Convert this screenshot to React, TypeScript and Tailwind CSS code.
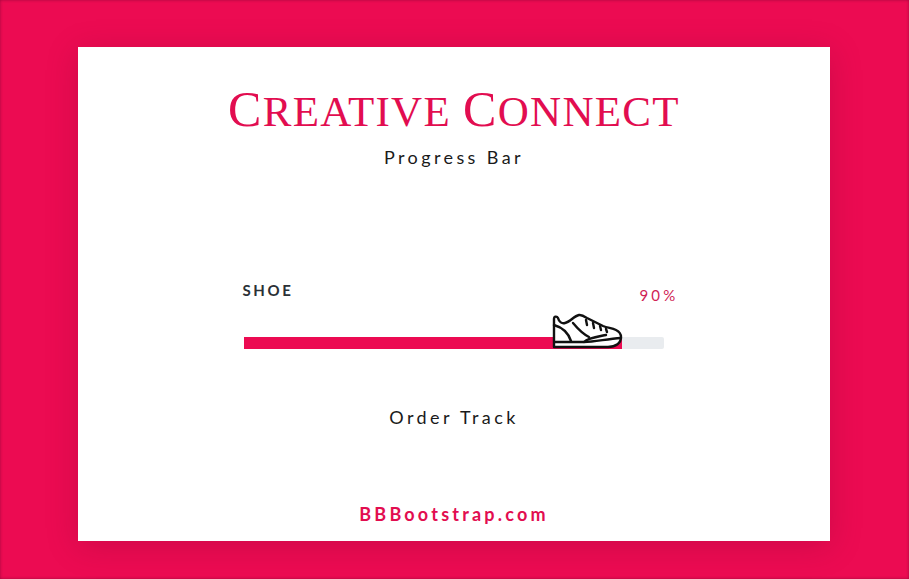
export default function App() {
  const small = "text-[43px]";
  const big = "text-[50px]";
  return (
    <div className="h-[579px] w-[909px] bg-[#ec0b52] pt-[47px] pl-[78px] overflow-hidden shadow-[inset_0_0_3px_rgba(80,0,40,0.5)]">
      <div className="relative h-[494px] w-[752px] bg-white shadow-[0_5px_30px_rgba(100,0,40,0.22)] flex flex-col items-center" style={{ fontFamily: '"Lato", sans-serif' }}>
        <h1 className="mt-[32px] h-[60px] leading-[60px] text-[#e20d50] tracking-[1.3px] whitespace-nowrap [font-family:'Liberation_Serif',serif]">
          <span className={big}>C</span><span className={small}>REATIVE</span><span className={small}> </span><span className={big}>C</span><span className={small}>ONNECT</span>
        </h1>
        <p className="mt-[7px] h-[22px] text-[18px] leading-[22px] tracking-[3.4px] text-[#1a1a1a]">Progress Bar</p>

        <div className="mt-[113px] w-[420px] ml-[-1px]">
          <div className="flex justify-between">
            <span className="text-[15px] leading-[18px] font-bold tracking-[2.6px] text-[#2b3136] ml-[-1px]">SHOE</span>
            <span className="mt-[5px] mr-[-15px] text-[15px] leading-[18px] tracking-[3.2px] text-[#d01f54]">90%</span>
          </div>
          <div className="relative mt-[33px] h-[12px] rounded-[2px] bg-[#e9ecef]">
            <div className="h-full w-[378px] bg-[#ec0b52]"></div>
            <svg className="absolute left-[307px] top-[-25px]" width="75" height="38" viewBox="0 0 75 38" fill="none" stroke="#111" strokeWidth="2.4" strokeLinecap="round" strokeLinejoin="round">
              <path fill="#fff" d="M3 7 C3 4 6 4 7 6 C8 10 11 12 14 11 C19 10 23 4 28 3 C31 2.5 33 4 36 6 L52 14 C57 16 61 16 65 18 C69 20 70 22 70 25 C70 31 65 35 57 35 L3 35 Z" />
              <path d="M3 13 C10 15 17 20 20 29" />
              <path d="M22 11 C27 17 32 22 38 25" />
              <path d="M4 30 L33 30 C44 30 55 27 70 26" />
              <path d="M33 30 C37 26 45 25 55 23" />
              <path d="M35 8 L36 13 M42 11 L43 16 M49 14 L50 18 M55 17 L56 20" />
            </svg>
          </div>
        </div>

        <p className="mt-[57px] h-[22px] text-[18px] leading-[22px] tracking-[3.4px] text-[#1a1a1a]">Order Track</p>
        <p className="mt-[75px] text-[18px] leading-[22px] font-bold tracking-[3.2px] text-[#e20d50]">BBBootstrap.com</p>
      </div>
    </div>
  );
}
